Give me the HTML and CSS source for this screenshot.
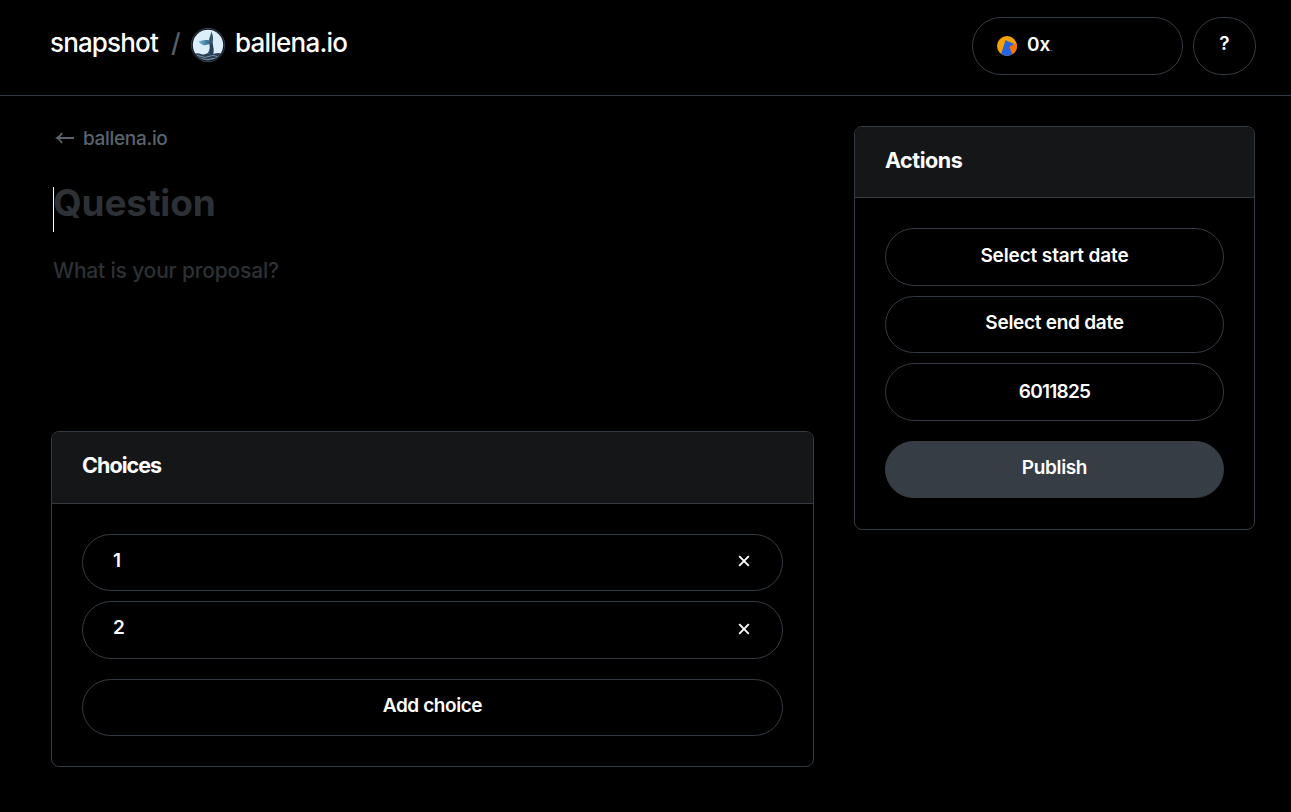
FILE: index.html
```html
<!DOCTYPE html>
<html lang="en">
<head>
<meta charset="utf-8">
<title>snapshot / ballena.io</title>
<link rel="stylesheet" href="styles.css">
</head>
<body>
<header class="topbar">
  <nav class="brand">
    <span class="brand-name">snapshot</span>
    <span class="slash">/</span>
    <svg class="space-logo" viewBox="0 0 36 36" width="36" height="36" aria-hidden="true">
      <defs>
        <clipPath id="disc"><circle cx="18" cy="18" r="15.2"/></clipPath>
        <linearGradient id="fluke"><stop offset="0" stop-color="#6dbbe0"/><stop offset="1" stop-color="#28506d"/></linearGradient>
        <linearGradient id="body"><stop offset="0" stop-color="#5d91b4"/><stop offset=".6" stop-color="#243f56"/></linearGradient>
      </defs>
      <circle cx="18" cy="18" r="16.7" fill="#0b1622" stroke="#3c4650" stroke-width=".9"/>
      <circle cx="18" cy="18" r="15.200" fill="#dceef9"/>
      <path d="M19.500 14c2 0 3.200.8 3.300 2.500.1 3 1.700 5.500.4 11.500h-7.400c3.200-3 4.400-6 3.700-10z" fill="url(#body)"/>
      <path d="M21.200 4.500c2 3.500 2.700 8.500.8 12.500l-2.500-1.500c-1.500-3.700 1.500-6.500 1.700-11z" fill="#35566e"/>
      <path d="M8.500 14.500c3.200-.5 5.500-2.300 11-1l2.300 2.500-1.500 1.500c-2.500-1-3.500.7-5.300.7-2.600 0-4.500-1.500-6.500-3.700z" fill="url(#fluke)"/>
      <g clip-path="url(#disc)">
        <path d="M2 27.500q5-2 9-.6 3 1.200 6-.3 5 1.300 8-.2 4-1 9 1V36H2z" fill="#2a4056"/>
        <path d="M3 29q4-1.600 8 .4t8 0 8 0 7-.6M6 31.600q4-1 7 .4t8 0 8 0" fill="none" stroke="#8ba3b5" stroke-width=".8"/>
      </g>
    </svg>
    <span class="space-name">ballena.io</span>
  </nav>
  <div class="account">
    <button class="button wallet">
      <svg viewBox="0 0 20 20" width="20" height="20" aria-hidden="true">
        <clipPath id="avatar"><circle cx="10" cy="10" r="10"/></clipPath>
        <g clip-path="url(#avatar)">
          <path d="M0 0h20v20H0z" fill="#f3a000"/>
          <path d="M11 10.500 17.500 8 20 7v13h-5z" fill="#fa7300"/>
          <path d="M8.500 4.200 17.300 8 12.300 10.700 16 20H3.500z" fill="#2463e2"/>
        </g>
      </svg>
      <span class="address">0x<span class="dot">.</span></span>
    </button>
    <button class="button help"><span>?</span></button>
  </div>
</header>
<main class="page">
  <section class="editor">
    <a class="back">
      <svg viewBox="0 0 20 14" width="20" height="14" aria-hidden="true"><path d="M19 7H2M7 2Q5 5.700 2 7 5 8.300 7 12" fill="none" stroke="currentColor" stroke-width="1.800"/></svg>
      <span class="back-name">ballena.io</span>
    </a>
    <h1 class="question"><span>Question</span></h1>
    <p class="proposal"><span>What is your proposal?</span></p>
    <div class="block">
      <h2 class="block-title"><span class="t-choices">Choices</span></h2>
      <div class="block-body">
        <div class="button choice"><span>1</span><svg class="close" viewBox="0 0 12 12" width="12" height="12"><path d="M1.200 1.200 10.800 10.800M10.800 1.200 1.200 10.800"/></svg></div>
        <div class="button choice"><span>2</span><svg class="close" viewBox="0 0 12 12" width="12" height="12"><path d="M1.200 1.200 10.800 10.800M10.800 1.200 1.200 10.800"/></svg></div>
        <button class="button last add"><span class="t-add">Add choice</span></button>
      </div>
    </div>
  </section>
  <aside class="block actions">
    <h2 class="block-title"><span class="t-actions">Actions</span></h2>
    <div class="block-body">
      <button class="button start"><span class="t-start">Select start date</span></button>
      <button class="button"><span class="t-end">Select end date</span></button>
      <button class="button number"><span class="t-number">6011825</span></button>
      <button class="button last publish"><span class="t-publish">Publish</span></button>
    </div>
  </aside>
</main>
</body>
</html>
```
FILE: styles.css
```css
* { box-sizing: border-box; }
body {
  margin: 0;
  height: 812px;
  overflow: hidden;
  background: #000;
  color: #fff;
  font-family: Inter, "Liberation Sans", sans-serif;
  font-size: 19px;
  font-weight: 500;
}
.topbar {
  display: flex;
  justify-content: space-between;
  align-items: flex-start;
  height: 96px;
  padding: 17px 35px 0 50px;
  border-bottom: 1px solid #343b42;
}
.brand { display: flex; align-items: center; height: 52px; font-size: 26px; white-space: nowrap; }
.brand-name { width: 109px; letter-spacing: -.85px; }
.slash { width: 19px; margin-left: 12px; color: #56606a; font-weight: 500; }
.space-logo { display: block; margin: 4px 9px 0 0; }
.space-name { letter-spacing: -.78px; }
.brand-name, .slash, .space-name { margin-top: -1px; }
.account { display: flex; gap: 10px; }
.button {
  display: flex;
  align-items: center;
  justify-content: center;
  width: 100%;
  height: 57.500px;
  padding: 0 0 3px;
  border: 1px solid #343b42;
  border-radius: 29px;
  background: transparent;
  color: #fff;
  font: inherit;
  font-weight: 600;
  line-height: 24px;
  white-space: nowrap;
}
.wallet { width: 211px; justify-content: flex-start; padding: 0 0 4px 24px; gap: 10px; }
.wallet svg { margin-top: 4px; }
.address { margin-top: 6px; }
.dot { font-size: 8px; color: #2b6f9b; }
.help { width: 63px; padding-bottom: 4px; }
.page { display: flex; align-items: flex-start; gap: 40px; padding: 30px 36px 0 51px; }
.editor { width: 763px; }
.back { display: flex; align-items: center; gap: 8px; height: 24px; padding-left: 4px; color: #5a646e; }
.back-name { letter-spacing: -.32px; }
.question {
  display: flex;
  align-items: center;
  height: 45px;
  margin: 37px 0 0 2px;
  padding-bottom: 14px;
  border-left: 1px solid #fff;
  color: #2d3135;
  font-size: 37px;
  font-weight: 700;
  letter-spacing: -.15px;
}
.question span { margin-left: -1px; }
.proposal {
  height: 174px;
  margin: 25px 0 0 2px;
  color: #2d3135;
  font-size: 21px;
  line-height: 28px;
  letter-spacing: -.18px;
}
.block { border: 1px solid #343b42; border-radius: 8px; overflow: hidden; }
.actions { width: 401px; }
.block-title {
  height: 71px;
  margin: 0;
  padding: 19px 30px 0;
  background: #151617;
  border-bottom: 1px solid #343b42;
  font-size: 21.500px;
  font-weight: 700;
  line-height: 28px;
}
.editor .block-title { height: 72px; }
.block-body { display: flex; flex-direction: column; gap: 10px; padding: 30px 30px 31px; }
.editor .block-body { padding-bottom: 30px; }
.editor .button { height: 57.400px; padding-bottom: 4px; }
.editor .choice { justify-content: space-between; padding: 0 32px 4px 30px; }
.editor .add { padding-bottom: 2px; }
.close { margin-top: 1px; fill: none; stroke: #fff; stroke-width: 1.900; }
.last { margin-top: 10px; }
.actions .start { padding-bottom: 2px; }
.actions .number { padding-bottom: 0; }
.publish { background: #363d44; border-color: #363d44; }
.t-choices { letter-spacing: -.95px; }
.t-actions { letter-spacing: -.45px; }
.t-add { letter-spacing: -.42px; }
.t-start { letter-spacing: -.13px; }
.t-end { letter-spacing: -.27px; }
.t-number { letter-spacing: -.75px; }
.t-publish { letter-spacing: -.35px; }
```
